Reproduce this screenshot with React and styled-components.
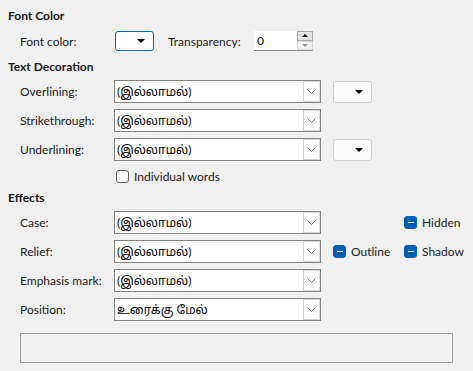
import React from 'react'
import styled, { createGlobalStyle } from 'styled-components'

const GlobalStyle = createGlobalStyle`
    html, body {
        margin: 0;
        padding: 0;
        background: #f0f0f0;
    }
    body {
        font-family: Lato, "Noto Sans", "Noto Sans Tamil", sans-serif;
        font-size: 12px;
        color: #1b1b1b;
    }
`

const Page = styled.div`
    width: 473px;
    height: 371px;
    padding: 8px 0 0 8px;
    box-sizing: border-box;
    overflow: hidden;
`

const Header = styled.div`
    height: 16px;
    line-height: 16px;
    font-weight: 700;
    margin-top: ${p => p.$top || 0}px;
`

const Row = styled.div`
    display: flex;
    align-items: center;
    height: ${p => p.$h || 23}px;
    margin-top: ${p => p.$top || 0}px;
    padding-left: 12px;
`

const Label = styled.div`
    width: ${p => p.$w || 94}px;
    flex: none;
`

const Combo = styled.div`
    width: 207px;
    height: 100%;
    box-sizing: border-box;
    background: #fff;
    border: 1px solid #848484;
    display: flex;
    align-items: center;
    flex: none;
`

const ComboText = styled.div`
    flex: 1;
    padding-left: 2px;
    color: #000;
    white-space: nowrap;
`

const ComboButton = styled.div`
    width: 15px;
    align-self: stretch;
    margin: 0 0 0 0;
    border: 1px solid #d6d6d6;
    border-right-color: #e4e4e4;
    display: flex;
    align-items: center;
    justify-content: center;
`

const Extra = styled.div`
    width: ${p => p.$w || 71}px;
    margin-left: ${p => p.$ml || 0}px;
    display: flex;
    align-items: center;
    flex: none;
`

const ColorButton = styled.div`
    width: 39px;
    height: ${p => p.$h || 20}px;
    box-sizing: border-box;
    background: ${p => (p.$focus ? '#fff' : '#fbfbfb')};
    border: 1px solid ${p => (p.$focus ? '#0067c0' : '#d0d0d0')};
    border-radius: 3px;
    display: flex;
    align-items: center;
    justify-content: flex-end;
    padding-right: 8px;
    flex: none;
`

const Spin = styled.div`
    width: 59px;
    height: 20px;
    display: flex;
    background: #fff;
    border-bottom: 1px solid #8a8a8a;
    box-sizing: border-box;
`

const SpinValue = styled.div`
    flex: 1;
    padding-left: 3px;
    line-height: 19px;
    color: #000;
`

const SpinButtons = styled.div`
    width: 16px;
    display: flex;
    flex-direction: column;
`

const SpinButton = styled.div`
    flex: 1;
    border: 1px solid ${p => (p.$off ? '#d8d8d8' : '#a8a8a8')};
    background: ${p => (p.$off ? '#f4f4f4' : '#e6e6e6')};
    display: flex;
    align-items: center;
    justify-content: center;
`

const Check = styled.div`
    width: 13px;
    height: 13px;
    box-sizing: border-box;
    border-radius: 3px;
    flex: none;
    display: flex;
    align-items: center;
    justify-content: center;
    margin-right: 5px;
    background: ${p => (p.$on ? '#005fb8' : '#fff')};
    border: 1px solid ${p => (p.$on ? '#005fb8' : '#5e5e5e')};
`

const Dash = styled.div`
    width: 6px;
    height: 1.5px;
    background: #fff;
`

const CheckRow = styled.div`
    display: flex;
    align-items: center;
    height: 16px;
    margin-top: 7px;
    padding-left: 108px;
`

const Preview = styled.div`
    width: 433px;
    height: 30px;
    margin: 12px 0 0 12px;
    box-sizing: border-box;
    border: 1px solid #a0a0a0;
`

const Chevron = () => (
    <svg width="9" height="5" viewBox="0 0 9 5">
        <path d="M0.5 0.5 L4.5 4.5 L8.5 0.5" fill="none" stroke="#7a7a7a" strokeWidth="1" />
    </svg>
)

const Tri = ({ down = true, color = '#000', w = 8 }) => (
    <svg width={w} height={w / 2} viewBox="0 0 8 4">
        <path d={down ? 'M0 0 L8 0 L4 4 Z' : 'M0 4 L8 4 L4 0 Z'} fill={color} />
    </svg>
)

const NONE = '(இல்லாமல்)'

const ComboBox = ({ value = NONE }) => (
    <Combo>
        <ComboText>{value}</ComboText>
        <ComboButton><Chevron /></ComboButton>
    </Combo>
)

const CheckBox = ({ label, on }) => (
    <>
        <Check $on={on}>{on && <Dash />}</Check>
        <span>{label}</span>
    </>
)

export default function App() {
    return (
        <Page>
            <GlobalStyle />
            <Header>Font Color</Header>
            <Row $h={20} $top={7}>
                <Label>Font color:</Label>
                <Extra $w={53} $ml={1}>
                    <ColorButton $focus><Tri w={8} /></ColorButton>
                </Extra>
                <Label $w={86}>Transparency:</Label>
                <Spin>
                    <SpinValue>0</SpinValue>
                    <SpinButtons>
                        <SpinButton><Tri down={false} w={6} /></SpinButton>
                        <SpinButton $off><Tri w={6} color="#9a9a9a" /></SpinButton>
                    </SpinButtons>
                </Spin>
            </Row>

            <Header $top={8}>Text Decoration</Header>
            <Row $top={5}>
                <Label>Overlining:</Label>
                <ComboBox />
                <Extra $ml={12}>
                    <ColorButton $h={22}><Tri w={8} /></ColorButton>
                </Extra>
            </Row>
            <Row $top={6}>
                <Label>Strikethrough:</Label>
                <ComboBox />
            </Row>
            <Row $top={6}>
                <Label>Underlining:</Label>
                <ComboBox />
                <Extra $ml={12}>
                    <ColorButton $h={22}><Tri w={8} /></ColorButton>
                </Extra>
            </Row>
            <CheckRow>
                <CheckBox label="Individual words" />
            </CheckRow>

            <Header $top={6}>Effects</Header>
            <Row $top={5}>
                <Label>Case:</Label>
                <ComboBox />
                <Extra $ml={12} />
                <Extra><CheckBox on label="Hidden" /></Extra>
            </Row>
            <Row $top={6}>
                <Label>Relief:</Label>
                <ComboBox />
                <Extra $ml={12}><CheckBox on label="Outline" /></Extra>
                <Extra><CheckBox on label="Shadow" /></Extra>
            </Row>
            <Row $top={6}>
                <Label>Emphasis mark:</Label>
                <ComboBox />
            </Row>
            <Row $top={6}>
                <Label>Position:</Label>
                <ComboBox value="உரைக்கு மேல்" />
            </Row>
            <Preview />
        </Page>
    )
}
